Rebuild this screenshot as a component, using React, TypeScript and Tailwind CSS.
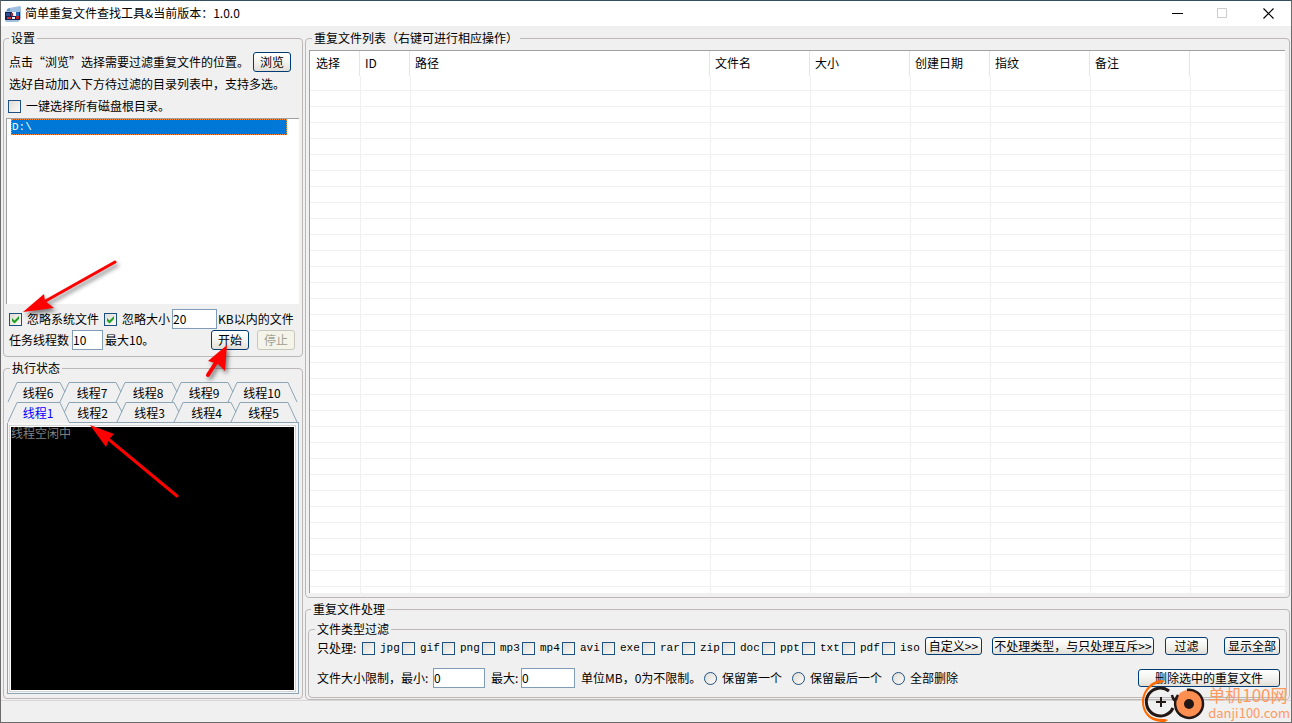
import { InputHTMLAttributes, ReactNode, useState } from "react";
import { clsx } from "clsx";

const columns = [
  { label: "选择", width: "w-[50px]" },
  { label: "ID", width: "w-[50px]" },
  { label: "路径", width: "w-[300px]" },
  { label: "文件名", width: "w-[100px]" },
  { label: "大小", width: "w-[100px]" },
  { label: "创建日期", width: "w-[80px]" },
  { label: "指纹", width: "w-[100px]" },
  { label: "备注", width: "w-[100px]" },
  { label: "", width: "" },
];

const fileTypes = [
  "jpg", "gif", "png", "mp3", "mp4", "avi", "exe",
  "rar", "zip", "doc", "ppt", "txt", "pdf", "iso",
];

const keepOptions = ["保留第一个", "保留最后一个", "全部删除"];

const tabRows = [
  [
    { id: 6, width: 52 },
    { id: 7, width: 56 },
    { id: 8, width: 56 },
    { id: 9, width: 56 },
    { id: 10, width: 60 },
  ],
  [
    { id: 1, width: 52 },
    { id: 2, width: 57 },
    { id: 3, width: 57 },
    { id: 4, width: 57 },
    { id: 5, width: 57 },
  ],
];

const emptyRows = Array.from({ length: 33 }, (_, i) => i);

function Group({
  title,
  className,
  children,
}: {
  title: string;
  className?: string;
  children: ReactNode;
}) {
  return (
    <fieldset
      className={clsx(
        "flex min-w-0 flex-col rounded-[4px] border border-[#bdb8b8]",
        className
      )}
    >
      <legend className="ml-[3px] px-[2px] leading-4">{title}</legend>
      {children}
    </fieldset>
  );
}

function Check({
  label,
  defaultChecked,
  className,
}: {
  label: string;
  defaultChecked?: boolean;
  className?: string;
}) {
  return (
    <label className={clsx("flex items-center gap-[5px] whitespace-nowrap", className)}>
      <span className="relative h-[13px] w-[13px] shrink-0">
        <input
          type="checkbox"
          defaultChecked={defaultChecked}
          className="peer block h-[13px] w-[13px] appearance-none border border-[#1c5180] bg-gradient-to-br from-[#dfddd8] to-[#fdfaf7]"
        />
        <svg
          viewBox="0 0 13 13"
          className="pointer-events-none absolute inset-0 hidden peer-checked:block"
        >
          <path d="M3 5v3l2.5 2.5L10 6V3L5.5 7.5z" fill="#21a121" />
        </svg>
      </span>
      {label}
    </label>
  );
}

function TextBox({ className, ...props }: InputHTMLAttributes<HTMLInputElement>) {
  return (
    <input
      type="text"
      className={clsx(
        "h-5 shrink-0 border border-[#7f9db9] bg-white pb-[1px] outline-none",
        className
      )}
      {...props}
    />
  );
}

function Button({
  className,
  disabled,
  children,
}: {
  className?: string;
  disabled?: boolean;
  children: ReactNode;
}) {
  return (
    <button
      type="button"
      disabled={disabled}
      className={clsx(
        "flex shrink-0 items-center justify-center whitespace-nowrap rounded-[3px] border",
        disabled
          ? "border-[#c9c7ba] bg-[#f5f4ea] text-[#a1a192]"
          : "border-[#003c74] bg-gradient-to-b from-white via-[#f3f3ef] to-[#e2dfd8]",
        className
      )}
    >
      {children}
    </button>
  );
}

function TitleBar() {
  return (
    <header className="flex h-[25px] shrink-0 items-center bg-white pl-1">
      <svg viewBox="0 0 16 16" className="h-4 w-4">
        <path d="M4 2l11-2 1 1v12l-3 3H1l-1-2V6z" fill="#9fc0df" />
        <path d="M2 3l3-1v3H2z" fill="#5e93c4" />
        <path d="M0 6h15v8H0z" fill="#14204f" />
        <path d="M1 7h4v3H1z" fill="#2b4f94" />
        <path d="M7 6h4v4H7z" fill="#f4f5fa" />
        <path d="M6 7h2v3H6z" fill="#c3242e" />
        <path d="M11 6h3v4h-3z" fill="#2c66b5" />
        <path d="M2 11h4v2H2z" fill="#c93540" />
        <path d="M7 11h3v2H7z" fill="#e8ecf4" />
        <path d="M11 10h3v3h-3z" fill="#b9212d" />
      </svg>
      <h1 className="ml-1 flex-1 pb-[2px]">简单重复文件查找工具&amp;当前版本：1.0.0</h1>
      <button type="button" aria-label="最小化" className="flex h-full w-[46px] items-center justify-center">
        <svg viewBox="0 0 11 11" className="h-[11px] w-[11px]" shapeRendering="crispEdges">
          <path d="M0 5.5h11" stroke="#000" />
        </svg>
      </button>
      <button type="button" aria-label="最大化" disabled className="flex h-full w-[45px] items-center justify-center">
        <svg viewBox="0 0 11 11" className="h-[11px] w-[11px]" fill="none">
          <path d="M.5.5h9v9h-9z" stroke="#cccccc" />
        </svg>
      </button>
      <button type="button" aria-label="关闭" className="flex h-full w-[46px] items-center justify-center">
        <svg viewBox="0 0 11 11" className="h-[11px] w-[11px]">
          <path d="M.5.5l10 10M10.5.5l-10 10" stroke="#000" strokeWidth="1.2" />
        </svg>
      </button>
    </header>
  );
}

function Settings() {
  return (
    <Group title="设置" className="pt-[5px] pr-[3px] pb-[5px] pl-[2px]">
      <div className="flex h-[22px] items-center justify-between pr-2 pl-[3px] whitespace-nowrap">
        <span>点击“浏览”选择需要过滤重复文件的位置。</span>
        <Button className="h-5 w-[38px]">浏览</Button>
      </div>
      <p className="flex h-[22px] items-center pl-[3px] whitespace-nowrap">
        选好自动加入下方待过滤的目录列表中，支持多选。
      </p>
      <Check label="一键选择所有磁盘根目录。" className="h-[22px] pl-[2px]" />
      <ul
        role="listbox"
        aria-label="目录列表"
        className="mt-[1px] h-[186px] border-t border-l border-[#a0a0a0] bg-white pr-3 pl-1"
      >
        <li
          role="option"
          aria-selected="true"
          className="flex h-4 items-center border border-dotted border-[#ff8728] bg-[#0078d7] font-['Liberation_Mono','Noto_Sans_CJK_SC',monospace] text-[11px] text-white"
        >
          D:\
        </li>
      </ul>
      <div className="mt-[5px] flex h-5 items-center pl-[3px] whitespace-nowrap">
        <Check label="忽略系统文件" defaultChecked className="w-[95px]" />
        <Check label="忽略大小" defaultChecked className="w-[68px]" />
        <TextBox aria-label="忽略大小" defaultValue="20" className="w-[45px]" />
        <span className="ml-[1px]">KB以内的文件</span>
      </div>
      <div className="flex h-[22px] items-center pr-1 pl-[3px] whitespace-nowrap">
        <label htmlFor="threads" className="w-[63px]">任务线程数</label>
        <TextBox id="threads" defaultValue="10" className="w-[31px]" />
        <span className="ml-[2px] flex-1">最大10。</span>
        <Button className="h-5 w-[38px]">开始</Button>
        <Button className="ml-2 h-5 w-[38px]" disabled>停止</Button>
      </div>
    </Group>
  );
}

function Tab({
  id,
  width,
  active,
  last,
  afterActive,
  onSelect,
}: {
  id: number;
  width: number;
  active: boolean;
  last: boolean;
  afterActive: boolean;
  onSelect: () => void;
}) {
  // neighbours overlap, so only the front tab draws its whole right slope
  const left = afterActive ? "M4.5 10" : "M0 20";
  const right = active || last ? `L${width + 9} 20` : `L${width + 5} 10`;
  return (
    <button
      type="button"
      role="tab"
      aria-selected={active}
      onClick={onSelect}
      style={{ width }}
      className={clsx(
        "relative flex h-5 items-center justify-center pt-[2px] pl-2",
        active && "text-[#0000ff]"
      )}
    >
      <svg
        width={width}
        height="20"
        className="absolute top-0 left-0 overflow-visible"
        fill="none"
      >
        <path d={`${left} L9 .5 H${width} ${right}`} stroke="#8ba5b5" />
      </svg>
      <span className="relative">线程{id}</span>
    </button>
  );
}

function Status() {
  const [active, setActive] = useState(1);
  return (
    <Group title="执行状态" className="flex-1 pt-[6px] pr-[3px] pb-1 pl-[3px]">
      <div role="tablist" className="pl-[1px]">
        {tabRows.map((row, r) => (
          <div key={r} className="flex">
            {row.map((tab, i) => (
              <Tab
                key={tab.id}
                id={tab.id}
                width={tab.width}
                active={tab.id === active}
                last={i === row.length - 1}
                afterActive={row[i - 1]?.id === active}
                onSelect={() => setActive(tab.id)}
              />
            ))}
          </div>
        ))}
      </div>
      <div className="flex">
        <span className="h-[1px] w-[62px]" />
        <span className="h-[1px] flex-1 bg-[#8ba5b5]" />
      </div>
      <div className="flex flex-1 border border-t-0 border-[#8ba5b5] bg-[#f6f6f6] pt-[2px] pr-[2px] pb-[1px] pl-[1px]">
        <div className="flex flex-1 border border-[#d4d4d4] bg-white p-[1px]">
          <div role="tabpanel" className="flex-1 bg-black leading-3 text-[#808080]">
            线程空闲中
          </div>
        </div>
      </div>
    </Group>
  );
}

function FileTable() {
  return (
    <Group
      title="重复文件列表（右键可进行相应操作）"
      className="min-h-0 flex-1 pt-1 pr-1 pb-1 pl-[3px]"
    >
      <div className="min-h-0 flex-1 overflow-hidden border-t border-l border-[#a0a0a0] bg-white">
        <table className="w-full table-fixed border-separate border-spacing-0">
          <thead>
            <tr>
              {columns.map((column, i) => (
                <th
                  key={i}
                  className={clsx(
                    "h-[25px] pt-0 pr-0 pb-[2px] text-left font-normal",
                    i === 0 ? "pl-[6px]" : "pl-[5px]",
                    column.label && "border-r border-[#e5e5e5]",
                    column.width
                  )}
                >
                  {column.label}
                </th>
              ))}
            </tr>
          </thead>
          <tbody>
            {emptyRows.map((row) => (
              <tr key={row}>
                {columns.map((_, i) => (
                  <td
                    key={i}
                    className={clsx(
                      "border-b border-[#f0f0f0] p-0",
                      row === 0 ? "h-[15px]" : "h-4",
                      i > 0 && "border-l"
                    )}
                  />
                ))}
              </tr>
            ))}
          </tbody>
        </table>
      </div>
    </Group>
  );
}

function Processing() {
  return (
    <Group title="重复文件处理" className="px-[2px] pt-1 pb-[1px]">
      <Group title="文件类型过滤" className="pr-[6px] pb-2 pl-[3px]">
        <div className="flex h-[22px] items-start pl-[5px] whitespace-nowrap">
          <span className="w-[45px] shrink-0 leading-[22px]">只处理:</span>
          {fileTypes.map((type) => (
            <Check
              key={type}
              label={type}
              className="h-[22px] w-10 shrink-0 font-['Liberation_Mono',monospace] text-[11px]"
            />
          ))}
          <Button className="ml-[3px] h-[18px] w-[57px]">自定义&gt;&gt;</Button>
          <Button className="ml-[10px] h-[18px] w-[162px]">
            不处理类型，与只处理互斥&gt;&gt;
          </Button>
          <Button className="ml-[11px] h-[18px] w-[43px]">过滤</Button>
          <Button className="ml-auto h-[18px] w-[56px]">显示全部</Button>
        </div>
        <div className="mt-2 flex h-[22px] items-center pl-[5px] whitespace-nowrap">
          <label htmlFor="min-size" className="w-[116px] shrink-0">文件大小限制，最小:</label>
          <TextBox id="min-size" defaultValue="0" className="w-[52px]" />
          <label htmlFor="max-size" className="ml-[6px] w-[30px] shrink-0">最大:</label>
          <TextBox id="max-size" defaultValue="0" className="w-[54px]" />
          <span className="ml-[6px] w-[123px] shrink-0">单位MB，0为不限制。</span>
          <div className="flex gap-[10px]">
            {keepOptions.map((option) => (
              <label key={option} className="flex items-center gap-[5px]">
                <input
                  type="radio"
                  name="keep"
                  className="h-[13px] w-[13px] appearance-none rounded-full border border-[#1c5180] bg-gradient-to-br from-[#dfddd8] to-[#fdfaf7] checked:border-4"
                />
                {option}
              </label>
            ))}
          </div>
          <Button className="ml-auto h-[18px] w-[142px]">删除选中的重复文件</Button>
        </div>
      </Group>
    </Group>
  );
}

// Red pointers laid over the left column
function Arrows() {
  return (
    <svg
      width="303"
      height="520"
      className="pointer-events-none absolute -top-px -left-px drop-shadow-[2px_3px_2px_rgba(0,0,0,0.5)]"
      fill="#ff0000"
      stroke="#ff0000"
    >
      <path d="M115 262L42 303" strokeWidth="3" strokeLinecap="round" />
      <path d="M23 312L44 294L45 301L54 308Z" stroke="none" />
      <path d="M208 375L219 358" strokeWidth="4" strokeLinecap="round" />
      <path d="M227 345L225 371L218 364L208 361Z" stroke="none" />
      <path d="M177 496L107 438" strokeWidth="3" strokeLinecap="round" />
      <path d="M90 425L114 434L109 439L106 447Z" stroke="none" />
    </svg>
  );
}

function Watermark() {
  return (
    <div className="pointer-events-none absolute right-[1px] bottom-0 flex items-end text-[#ff9a5f]">
      <svg viewBox="0 0 66 42" className="h-[42px] w-[66px]" fill="none">
        <path
          d="M23 2C11 3 2 10 2 22s9 18 21 17l3 1-3 2C8 43 0 33 0 22S9 0 20 0z"
          fill="#ff6a00"
        />
        <path d="M27 11A14 14 0 1 0 31 28" stroke="#231815" strokeWidth="3" />
        <path d="M19 17v10M14 22h10" stroke="#231815" strokeWidth="2" />
        <circle cx="47" cy="24" r="14" fill="#ff8f50" />
        <path
          d="M30 15c1 5 3 7 5 3M34 29A14 14 0 1 0 45 10M34 29c-2-6-1-10 2-14"
          stroke="#231815"
          strokeWidth="2.5"
        />
        <circle cx="47" cy="24" r="5" fill="#231815" />
      </svg>
      <div className="whitespace-nowrap">
        <div className="text-[17px] leading-[18px]">单机100网</div>
        <div className="text-[13px] leading-[18px]">danji100.com</div>
      </div>
    </div>
  );
}

export default function App() {
  return (
    <div className="relative flex h-screen flex-col overflow-hidden border border-[#6b6b6b] border-t-[#34505f] bg-[#f0f0f0] font-['Noto_Sans_CJK_SC','Liberation_Sans',sans-serif] text-[12px] leading-4 text-black">
      <TitleBar />
      <main className="flex min-h-0 flex-1 gap-[2px] pt-1 pr-[1px] pl-[2px]">
        <div className="flex w-[300px] shrink-0 flex-col gap-[3px] pb-[1px]">
          <Settings />
          <Status />
        </div>
        <div className="flex min-w-0 flex-1 flex-col gap-[3px]">
          <FileTable />
          <Processing />
        </div>
      </main>
      <footer className="h-[22px] shrink-0 border-t border-[#d7d7d7]" />
      <Arrows />
      <Watermark />
    </div>
  );
}
